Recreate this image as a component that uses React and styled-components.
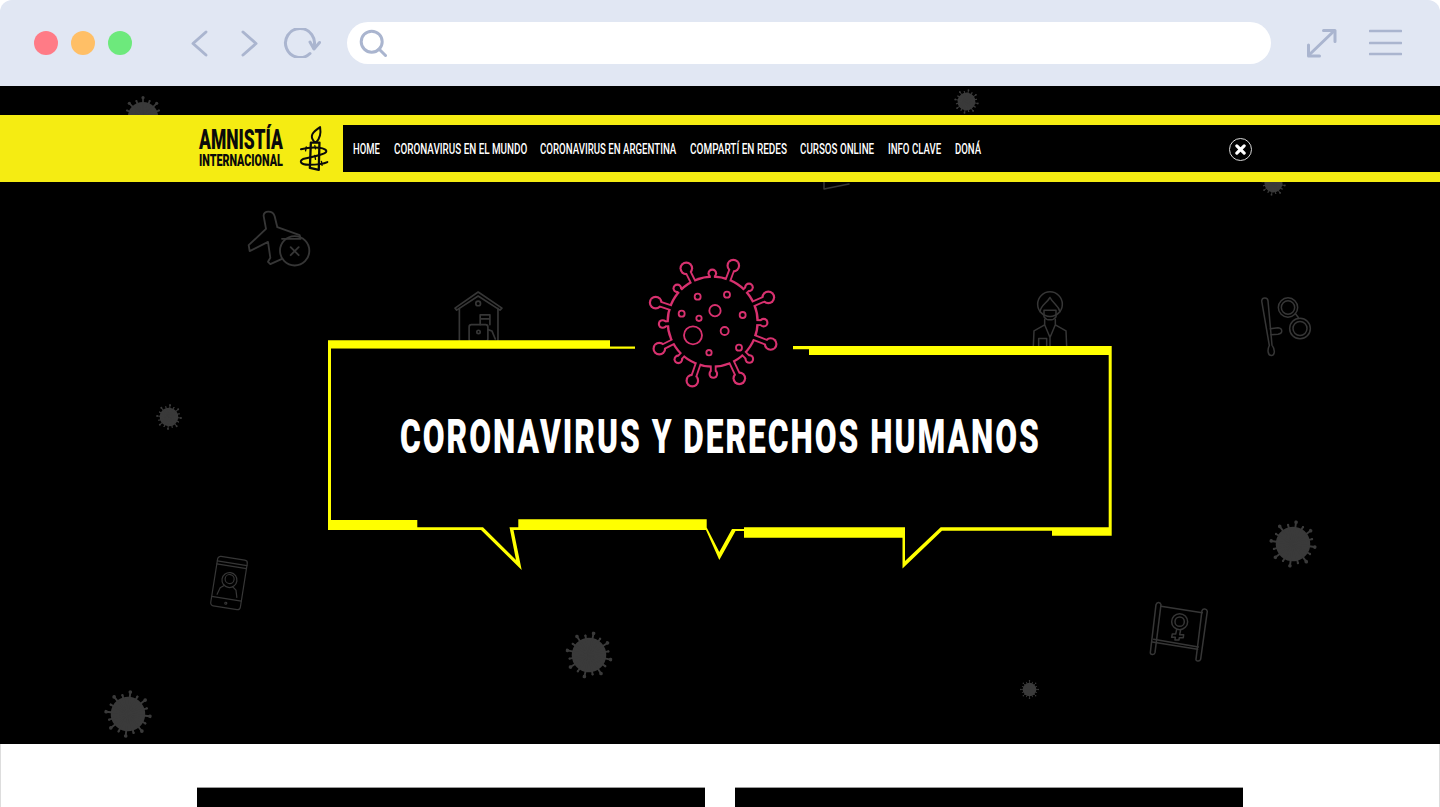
import React, { useLayoutEffect, useRef } from "react";
import styled, { createGlobalStyle } from "styled-components";

const GlobalStyle = createGlobalStyle`
  html, body {
    margin: 0;
    padding: 0;
    background: #ffffff;
    font-family: Roboto, "Liberation Sans", sans-serif;
  }
`;

const Page = styled.div`
  display: flex;
  flex-direction: column;
  height: 807px;
  overflow: hidden;
  background: #ffffff;
`;

const BrowserBar = styled.header`
  display: flex;
  align-items: center;
  flex: none;
  height: 86px;
  padding-left: 34px;
  background: #e1e7f3;
  border-radius: 12px 12px 0 0;
`;

const Dots = styled.div`
  display: flex;
  gap: 13px;
  margin-right: 58px;
`;

const Dot = styled.span`
  width: 24px;
  height: 24px;
  border-radius: 50%;
  background: ${({ $color }) => $color};
`;

const BarIcon = styled.svg`
  flex: none;
  width: ${({ $w }) => $w}px;
  height: 30px;
  margin-left: ${({ $gap }) => $gap || 0}px;
  fill: none;
  stroke: #aab5cf;
  stroke-width: 3;
  stroke-linecap: round;
  stroke-linejoin: round;
`;

const AddressBar = styled.div`
  display: flex;
  align-items: center;
  flex: none;
  width: 924px;
  height: 42px;
  margin-left: 26px;
  border-radius: 21px;
  background: #ffffff;
`;

const Hero = styled.section`
  position: relative;
  display: flex;
  flex-direction: column;
  flex: none;
  height: 658px;
  padding-top: 29px;
  box-sizing: border-box;
  overflow: hidden;
  background: #000000;
`;

const Decor = styled.svg`
  position: absolute;
  left: ${({ $x }) => $x}px;
  top: ${({ $y }) => $y - 86}px;
  width: ${({ $w }) => $w}px;
  height: ${({ $h }) => $h}px;
  fill: none;
  stroke: #363636;
  stroke-linecap: round;
  stroke-linejoin: round;
  transform: rotate(${({ $rotate }) => $rotate || 0}deg);
`;

const SiteNav = styled.nav`
  position: relative;
  z-index: 2;
  display: flex;
  align-items: center;
  flex: none;
  height: 67px;
  padding-left: 199px;
  box-sizing: border-box;
  background: #f5ec12;
`;

const Logo = styled.a`
  display: flex;
  flex-direction: column;
  flex: none;
  padding-bottom: 2px;
  color: #0a0a0a;
  font-weight: 900;
`;

const LogoMain = styled.div`
  font-size: 27px;
  line-height: 25px;
`;

const LogoSub = styled.div`
  margin-top: 1px;
  font-size: 16px;
  line-height: 14px;
`;

const Candle = styled.svg`
  flex: none;
  width: 33px;
  height: 48px;
  margin: 0 13px 0 14px;
  fill: none;
  stroke: #0a0a0a;
  stroke-linecap: round;
  stroke-linejoin: round;
`;

const Menu = styled.ul`
  position: relative;
  display: flex;
  align-items: center;
  flex: 1;
  gap: 13.6px;
  height: 47px;
  margin: 0;
  padding: 0 0 0 10px;
  list-style: none;
  background: #000000;
`;

const MenuItem = styled.li`
  padding-top: 1px;
  color: #ffffff;
  font-size: 14px;
  font-weight: 500;
  line-height: 46px;
`;

const CloseButton = styled.button`
  position: absolute;
  left: 886px;
  top: 13px;
  display: flex;
  align-items: center;
  justify-content: center;
  width: 23px;
  height: 23px;
  padding: 0;
  border: 1px solid #d8d8d8;
  border-radius: 50%;
  background: #000000;

  svg {
    width: 11px;
    height: 11px;
    stroke: #ffffff;
    stroke-width: 3.4;
    stroke-linecap: round;
  }
`;

const BubbleStage = styled.div`
  position: relative;
  z-index: 1;
  display: grid;
  flex: none;
  align-self: center;
  width: 800px;
  height: 330px;
  margin-top: 68px;
`;

const BubbleArt = styled.svg`
  grid-area: 1 / 1;
  width: 800px;
  height: 330px;
`;

const Title = styled.h1`
  grid-area: 1 / 1;
  justify-self: center;
  align-self: start;
  margin: 164px 0 0;
  color: #ffffff;
  font-size: 48px;
  font-weight: 900;
  line-height: 46px;
  letter-spacing: 3px;
`;

const Lower = styled.section`
  display: flex;
  justify-content: center;
  flex: 1;
  gap: 30px;
  padding-top: 43px;
  border-left: 1px solid #dddddd;
  border-right: 1px solid #dddddd;
`;

const Card = styled.div`
  flex: none;
  width: 508px;
  height: 200px;
  border-top: 1px solid #9a9a9a;
  background: #000000;
`;

const FitBox = styled.span`
  display: block;
  width: ${({ $w }) => $w}px;
`;

const FitInner = styled.span`
  display: inline-block;
  white-space: nowrap;
  transform-origin: left center;
`;

// condensed face is not installed, so the text gets squeezed to its measured width
const FitText = ({ width, children }) => {
  const ref = useRef(null);
  useLayoutEffect(() => {
    const natural = ref.current.offsetWidth;
    ref.current.style.transform = `scaleX(${width / natural})`;
  }, [width]);
  return (
    <FitBox $w={width}>
      <FitInner ref={ref}>{children}</FitInner>
    </FitBox>
  );
};

const menuLinks = [
  ["HOME", 27],
  ["CORONAVIRUS EN EL MUNDO", 133],
  ["CORONAVIRUS EN ARGENTINA", 136],
  ["COMPARTÍ EN REDES", 97],
  ["CURSOS ONLINE", 74],
  ["INFO CLAVE", 53],
  ["DONÁ", 26],
];

const bigBulbs = [[259, 55], [400, 47], [505, 142], [167, 158], [512, 282], [178, 296], [277, 392], [418, 385]];
const smallBulbs = [[337, 70], [447, 112], [232, 115], [188, 222], [491, 218], [235, 328], [448, 327], [340, 372]];
const spots = [[345, 182, 17], [279, 256, 27], [374, 243, 12], [293, 140, 9], [381, 134, 9], [245, 191, 9], [297, 205, 8], [428, 195, 9], [417, 293, 9], [327, 308, 8]];

const bubbleOutline = `
  M635 346.5 L610 346.5 L610 340.3 L328 340.3 L328 530 L481 530 L521.7 570 L513.5 530 L706 530
  L719.3 560 L735.5 531 L744 531 L744 537.7 L902.5 537.7 L902.5 568.5 L942 530.7 L1052 530.7
  L1052 535.7 L1111.7 535.7 L1111.7 346 L793 346 L793 349.3 L809 349.3 L809 355 L1108.7 355
  L1108.7 527.3 L940.7 527.3 L905 561 L905 527.3 L744 527.3 L744 529 L732 529 L719.3 552 L706.7 527.5
  L706.7 519.3 L518.3 519.3 L518.3 527.3 L509.5 527.3 L516 560 L483 527.3 L417.3 527.3 L417.3 520
  L331 520 L331 348.5 L635 348.8 Z`;

const CoronaBadge = () => (
  <g transform="translate(600 250) scale(0.3333)">
    <g stroke="#d8316f" fill="#d8316f">
      {[...bigBulbs, ...smallBulbs].map(([x, y]) => (
        <line key={`${x}-${y}`} x1="338" y1="215" x2={x} y2={y} strokeWidth="20" />
      ))}
      {bigBulbs.map(([x, y]) => <circle key={x} cx={x} cy={y} r="20.5" strokeWidth="0" />)}
      {smallBulbs.map(([x, y]) => <circle key={x} cx={x} cy={y} r="14.5" strokeWidth="0" />)}
      <circle cx="338" cy="215" r="138.5" strokeWidth="0" />
    </g>
    <g stroke="#000000" fill="#000000">
      {[...bigBulbs, ...smallBulbs].map(([x, y]) => (
        <line key={`${x}-${y}`} x1="338" y1="215" x2={x} y2={y} strokeWidth="9" />
      ))}
      {bigBulbs.map(([x, y]) => <circle key={x} cx={x} cy={y} r="14" strokeWidth="0" />)}
      {smallBulbs.map(([x, y]) => <circle key={x} cx={x} cy={y} r="8" strokeWidth="0" />)}
      <circle cx="338" cy="215" r="131.5" strokeWidth="0" />
    </g>
    {spots.map(([x, y, r]) => (
      <circle key={`${x}-${y}`} cx={x} cy={y} r={r} fill="none" stroke="#d8316f" strokeWidth="5.5" />
    ))}
  </g>
);

const ghostSpikes = Array.from({ length: 16 }, (_, i) => i);

const GhostVirus = ({ x, y, size, rotate }) => (
  <Decor $x={x - size / 2} $y={y - size / 2} $w={size} $h={size} $rotate={rotate} viewBox="-25 -25 50 50">
    <circle r="18" fill="#3a3a3a" stroke="none" />
    {ghostSpikes.map((i) => {
      const a = (i * Math.PI) / 8;
      const len = i % 2 ? 20.5 : 23;
      return (
        <g key={i} stroke="#3a3a3a" fill="#3a3a3a">
          <line x1="0" y1="0" x2={Math.cos(a) * len} y2={Math.sin(a) * len} strokeWidth="2" />
          <circle cx={Math.cos(a) * len} cy={Math.sin(a) * len} r={i % 2 ? 1.2 : 1.9} stroke="none" />
        </g>
      );
    })}
  </Decor>
);

const App = () => {
  return (
    <Page>
      <GlobalStyle />
      <BrowserBar>
        <Dots>
          <Dot $color="#ff7b86" />
          <Dot $color="#ffbf66" />
          <Dot $color="#6de97c" />
        </Dots>
        <BarIcon $w={20} viewBox="190 28 20 30">
          <path d="M206 32 L193 43.5 L206 55" />
        </BarIcon>
        <BarIcon $w={20} $gap={30} viewBox="240 28 20 30">
          <path d="M243 32 L256 43.5 L243 55" />
        </BarIcon>
        <BarIcon $w={38} $gap={23} viewBox="283 28 38 30">
          <path d="M313.6 48 A14.5 14.5 0 1 0 310 53.5" />
          <path d="M310 42 L314 49 L319.5 42.5" />
        </BarIcon>
        <AddressBar>
          <BarIcon $w={40} viewBox="347 28 40 30">
            <circle cx="371.7" cy="41.7" r="10.5" />
            <path d="M379 49 L385.5 55.5" />
          </BarIcon>
        </AddressBar>
        <BarIcon $w={33} $gap={34} viewBox="1305 28 33 30">
          <path d="M1309 55 L1334 31" />
          <path d="M1323.5 30.5 L1335 30.5 L1335 41.5" />
          <path d="M1308.5 45 L1308.5 56 L1319.5 56" />
        </BarIcon>
        <BarIcon $w={33} $gap={31} viewBox="1369 28 33 30">
          <path d="M1370 31 L1401 31 M1370 43 L1401 43 M1370 54 L1401 54" strokeWidth="2.6" />
        </BarIcon>
      </BrowserBar>

      <Hero>
        <GhostVirus x={143} y={117} size={42} />
        <GhostVirus x={966} y={101} size={25} rotate={10} />
        <GhostVirus x={1273} y={183} size={25} rotate={10} />
        <GhostVirus x={169} y={417} size={26} rotate={5} />
        <GhostVirus x={1293} y={544} size={48} rotate={8} />
        <GhostVirus x={589} y={655} size={48} rotate={12} />
        <GhostVirus x={128} y={714} size={48} rotate={6} />
        <GhostVirus x={1029} y={689} size={19} />

        <Decor $x={247} $y={210} $w={65} $h={57} viewBox="440 360 195 170" strokeWidth="5.5">
          <path d="M490 378 C488 360 518 360 523 378 L531 411 L598 435 L601 446 L545 446 M497 416 L445 465 L448 483 L503 455 L510 503 L503 515 L510 522 L545 506 M490 378 L497 416" />
          <circle cx="583" cy="482" r="44" />
          <path d="M571 471 L595 495 M595 471 L571 495" />
        </Decor>
        <Decor $x={453} $y={290} $w={51} $h={51} viewBox="1060 600 152 152" strokeWidth="5">
          <path d="M1066 654 L1135 606 L1206 654 L1200 660 L1135 618 L1071 660 Z" />
          <path d="M1079 655 L1079 750 M1194 655 L1194 750" />
          <circle cx="1135" cy="640" r="7" />
          <rect x="1108" y="703" width="56" height="50" rx="7" />
          <path d="M1141 703 L1141 674 L1170 674 L1170 703 M1141 686 L1170 686 M1164 718 L1176 722 L1186 746" />
          <circle cx="1136" cy="725" r="5" />
        </Decor>
        <Decor $x={1030} $y={290} $w={40} $h={57} viewBox="30 30 120 170" strokeWidth="4.5">
          <circle cx="90" cy="72" r="37" />
          <path d="M60 95 C62 75 78 72 90 52 C100 72 116 75 120 95" />
          <path d="M72 90 L108 90 L108 110 C100 122 80 122 72 110 Z" />
          <path d="M74 118 L74 134 L42 152 L40 198 M106 118 L106 134 L138 152 L140 198 M74 134 L90 172 L106 134 M90 172 L90 198" />
          <path d="M56 198 L56 175 L80 175 L80 198" />
        </Decor>
        <Decor $x={1258} $y={295} $w={55} $h={62} viewBox="715 45 165 185" strokeWidth="4.5">
          <path d="M726 62 C728 50 744 52 745 62 L757 195 C768 210 765 226 755 226 C745 226 742 210 749 196 Z" />
          <path d="M752 146 L775 143 C790 145 790 160 775 162 L754 164" />
          <circle cx="805" cy="82" r="29" />
          <circle cx="805" cy="82" r="20" />
          <circle cx="841" cy="145" r="31" />
          <circle cx="841" cy="145" r="21" />
          <path d="M827 100 L836 112" />
        </Decor>
        <Decor $x={210.5} $y={554.5} $w={36} $h={56} $rotate={9} viewBox="-2 -2 36 56" strokeWidth="1.2">
          <rect x="1" y="1" width="30" height="50" rx="3" />
          <path d="M1 6 L31 6 M1 9 L31 9 M1 42 L31 42" />
          <circle cx="16" cy="46.5" r="1" />
          <circle cx="16" cy="23" r="7.5" />
          <circle cx="16" cy="22" r="4.5" />
          <path d="M6 39 L8 32 L12 29 M26 39 L24 32 L20 29" />
        </Decor>
        <Decor $x={1146.7} $y={600} $w={63.3} $h={63.3} viewBox="440 270 190 190" strokeWidth="4.5">
          <path d="M467 284 C470 274 480 276 482 284 L464 428 C462 436 450 434 450 428 Z" />
          <path d="M605 302 C608 294 620 296 621 304 L601 448 C598 456 586 454 587 448 Z" />
          <path d="M482 289 L606 308 M460 388 L594 411 M456 396 L592 418" />
          <circle cx="538" cy="335" r="24" />
          <circle cx="538" cy="335" r="14" />
          <path d="M529 359 L526 372 L516 372 L514 382 L525 382 L524 390 L536 390 L537 383 L549 383 L550 374 L538 374 L541 360" />
        </Decor>
        <Decor $x={820} $y={178} $w={34} $h={14} viewBox="820 178 34 14" strokeWidth="1.5">
          <path d="M824 178 L824 189 L849 184" />
        </Decor>

        <SiteNav>
          <Logo>
            <LogoMain>
              <FitText width={84}>AMNISTÍA</FitText>
            </LogoMain>
            <LogoSub>
              <FitText width={84}>INTERNACIONAL</FitText>
            </LogoSub>
          </Logo>
          <Candle viewBox="350 40 100 145">
            <path d="M402 90 C388 75 395 62 420 46 C424 70 418 82 408 92 Z" strokeWidth="6" />
            <path d="M392 93 L418 93 L416 176 L389 170 Z" strokeWidth="7" />
            <path d="M362 113 C400 104 445 108 438 122 C432 130 400 135 368 143 C355 150 362 160 385 160 C410 160 430 158 442 152" strokeWidth="6" />
            <path d="M378 106 L376 118 M404 102 L406 112 M404 132 L406 144 M424 150 L426 162" strokeWidth="4" />
          </Candle>
          <Menu>
            {menuLinks.map(([label, width]) => (
              <MenuItem key={label}>
                <FitText width={width}>{label}</FitText>
              </MenuItem>
            ))}
            <CloseButton aria-label="Cerrar">
              <svg viewBox="0 0 12 12">
                <path d="M2 2 L10 10 M10 2 L2 10" />
              </svg>
            </CloseButton>
          </Menu>
        </SiteNav>

        <BubbleStage>
          <BubbleArt viewBox="320 250 800 330">
            <path d={bubbleOutline} fill="#ffff00" />
            <CoronaBadge />
          </BubbleArt>
          <Title>
            <FitText width={641}>CORONAVIRUS Y DERECHOS HUMANOS</FitText>
          </Title>
        </BubbleStage>
      </Hero>

      <Lower>
        <Card />
        <Card />
      </Lower>
    </Page>
  );
};

export default App;
